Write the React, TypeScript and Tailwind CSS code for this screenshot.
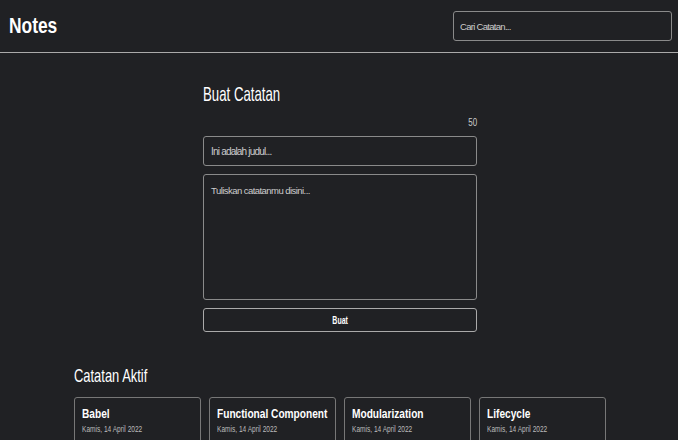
import React, { useState } from 'react';

type Note = {
  id: number;
  title: string;
  date: string;
};

const initialNotes: Note[] = [
  { id: 1, title: 'Babel', date: 'Kamis, 14 April 2022' },
  { id: 2, title: 'Functional Component', date: 'Kamis, 14 April 2022' },
  { id: 3, title: 'Modularization', date: 'Kamis, 14 April 2022' },
  { id: 4, title: 'Lifecycle', date: 'Kamis, 14 April 2022' },
];

const MAX_TITLE = 50;

export default function App() {
  const [notes] = useState<Note[]>(initialNotes);
  const [search, setSearch] = useState('');
  const [title, setTitle] = useState('');
  const [body, setBody] = useState('');

  const filtered = notes.filter(note =>
    note.title.toLowerCase().includes(search.toLowerCase())
  );

  return (
    <div className="min-h-[440px] bg-[#202124] text-white font-['Liberation_Sans',Arial,sans-serif]">
      {/* Header */}
      <header className="flex h-[53px] items-center justify-between border-b border-[#aaaaaa] pl-[9px] pr-[6px]">
        <h1 className="origin-left scale-x-[0.79] text-[22px] font-bold leading-none">Notes</h1>
        <input
          className="h-[30px] w-[219px] rounded-[3px] border border-[#8a8a8a] bg-transparent px-[6px] text-[9.5px] tracking-[-0.7px] text-white placeholder:text-[#cccccc] outline-none"
          placeholder="Cari Catatan..."
          value={search}
          onChange={e => setSearch(e.target.value)}
        />
      </header>

      <main className="flex flex-col items-center pl-[2px]">
        {/* Form */}
        <section className="mt-[30px] w-[274px]">
          <h2 className="origin-left scale-x-[0.63] whitespace-nowrap text-[21px] leading-none">
            Buat Catatan
          </h2>
          <p className="mt-[11px] text-right text-[10px] text-[#cccccc]">
            <span className="inline-block origin-right scale-x-[0.8]">{MAX_TITLE - title.length}</span>
          </p>
          <form className="mt-[6px] flex flex-col gap-[8px]" onSubmit={e => e.preventDefault()}>
            <input
              className="h-[30px] w-full rounded-[3px] border border-[#8a8a8a] bg-transparent px-[7px] text-[10px] tracking-[-0.8px] text-white placeholder:text-[#cccccc] outline-none"
              placeholder="Ini adalah judul..."
              value={title}
              onChange={e => setTitle(e.target.value.slice(0, MAX_TITLE))}
            />
            <textarea
              className="h-[126px] w-full resize-none rounded-[3px] border border-[#8a8a8a] bg-transparent px-[7px] py-[9px] text-[9.5px] tracking-[-0.55px] text-white placeholder:text-[#cccccc] outline-none"
              placeholder="Tuliskan catatanmu disini..."
              value={body}
              onChange={e => setBody(e.target.value)}
            />
            <button
              type="submit"
              className="h-[24px] w-full rounded-[3px] border border-[#aaaaaa] bg-transparent text-[10px] font-bold text-white"
            >
              <span className="inline-block scale-x-[0.7]">Buat</span>
            </button>
          </form>
        </section>

        {/* Notes list */}
        <section className="mt-[34px] w-[532px]">
          <h2 className="origin-left scale-x-[0.68] whitespace-nowrap text-[19px] leading-none">
            Catatan Aktif
          </h2>
          <div className="mt-[12px] grid grid-cols-4 gap-[8px]">
            {filtered.map(note => (
              <article
                key={note.id}
                className="h-[120px] rounded-[3px] border border-[#777777] px-[7px] pt-[8px]"
              >
                <h3 className="origin-left scale-x-[0.78] whitespace-nowrap text-[13px] font-bold leading-tight">
                  {note.title}
                </h3>
                <p className="mt-[1px] origin-left scale-x-[0.73] whitespace-nowrap text-[9px] text-[#bbbbbb]">
                  {note.date}
                </p>
              </article>
            ))}
          </div>
        </section>
      </main>
    </div>
  );
}
